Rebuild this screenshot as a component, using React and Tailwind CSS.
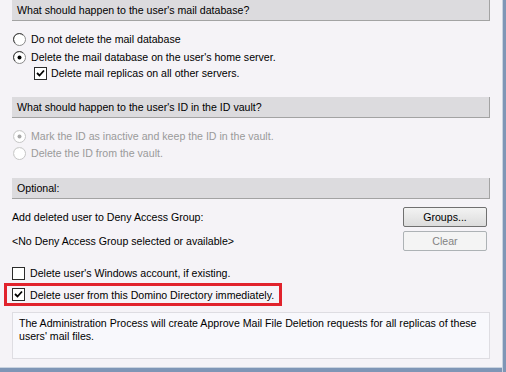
import React from 'react';

const font = { fontFamily: '"Liberation Sans", Arial, sans-serif' };

function Radio({ checked, disabled }) {
  const ring = disabled ? '#c4c4c4' : '#8a8a8a';
  const dark = disabled ? '#d6d6d6' : '#404040';
  const dot = disabled ? '#a8a8a8' : '#000000';
  return (
    <svg width="13" height="13" viewBox="0 0 13 13" className="shrink-0">
      <circle cx="6.5" cy="6.5" r="6" fill="#ffffff" stroke={ring} strokeWidth="1" />
      <path d="M2.2 10.2 A5 5 0 0 1 10.2 2.2" fill="none" stroke={dark} strokeWidth="1" />
      {checked && <circle cx="6.5" cy="6.5" r="2" fill={dot} />}
    </svg>
  );
}

function Check({ checked }) {
  return (
    <span className="w-[13px] h-[13px] shrink-0 border border-[#2b2b2b] bg-white flex items-center justify-center">
      {checked && (
        <svg width="9" height="9" viewBox="0 0 9 9">
          <path d="M1 4 L3.5 6.5 L8 1.5" fill="none" stroke="#000" strokeWidth="1.8" />
        </svg>
      )}
    </span>
  );
}

function Header({ children }) {
  return (
    <div className="h-[21px] bg-[#dcdbde] border-b border-r border-[#a3a3a3] flex items-center pl-[5px] text-[10.6px] text-black">
      {children}
    </div>
  );
}

export default function App() {
  return (
    <div className="w-[506px] h-[372px] bg-[#f5f3f7] flex overflow-hidden" style={font}>
      <div className="flex-1 flex flex-col">
        <div className="flex-1 pl-[12px] pr-[12px] text-[10.6px] text-black leading-[16px] whitespace-nowrap">
          <Header>What should happen to the user's mail database?</Header>

          <div className="mt-[10px] flex items-center gap-[5px] pl-[1px] h-[16px]">
            <Radio />
            <span>Do not delete the mail database</span>
          </div>
          <div className="mt-[2px] flex items-center gap-[5px] pl-[1px] h-[16px]">
            <Radio checked />
            <span>Delete the mail database on the user's home server.</span>
          </div>
          <div className="mt-[0px] flex items-center gap-[4px] pl-[22px] h-[16px]">
            <Check checked />
            <span>Delete mail replicas on all other servers.</span>
          </div>

          <div className="mt-[16px]">
            <Header>What should happen to the user's ID in the ID vault?</Header>
          </div>

          <div className="mt-[10px] flex items-center gap-[5px] pl-[1px] h-[16px] text-[#9a9a9a]">
            <Radio checked disabled />
            <span>Mark the ID as inactive and keep the ID in the vault.</span>
          </div>
          <div className="mt-[1px] flex items-center gap-[5px] pl-[1px] h-[16px] text-[#9a9a9a]">
            <Radio disabled />
            <span>Delete the ID from the vault.</span>
          </div>

          <div className="mt-[17px]">
            <Header>Optional:</Header>
          </div>

          <div className="mt-[8px] flex items-center justify-between">
            <span>Add deleted user to Deny Access Group:</span>
            <button className="w-[84px] h-[20px] mr-[3px] rounded-[2px] border border-[#707070] bg-gradient-to-b from-[#f3f3f3] to-[#dcdcdc] text-[10.6px] text-black">
              Groups...
            </button>
          </div>
          <div className="mt-[4px] flex items-center justify-between">
            <span>&lt;No Deny Access Group selected or available&gt;</span>
            <button disabled className="w-[84px] h-[20px] mr-[3px] rounded-[2px] border border-[#adb2b5] bg-[#f4f4f4] text-[10.6px] text-[#838383]">
              Clear
            </button>
          </div>

          <div className="mt-[14px] flex items-center gap-[5px] h-[16px]">
            <Check />
            <span>Delete user's Windows account, if existing.</span>
          </div>

          <div className="mt-[2px] -ml-[8px] w-[278px] h-[23px] border-[3px] border-[#e1222c] flex items-center gap-[5px] pl-[5px]">
            <Check checked />
            <span>Delete user from this Domino Directory immediately.</span>
          </div>

          <div className="mt-[6px] h-[47px] bg-[#f8f8fc] border border-[#dedde2] px-[6px] pt-[4px] leading-[13px] whitespace-normal">
            The Administration Process will create Approve Mail File Deletion requests for all replicas of these users' mail files.
          </div>
        </div>
        <div className="h-[5px] border-t border-[#c9d3e0] bg-[#7f96b6]" />
      </div>
      <div className="w-[4px] border-l border-[#c9d3e0] bg-[#7f96b6]" />
    </div>
  );
}
